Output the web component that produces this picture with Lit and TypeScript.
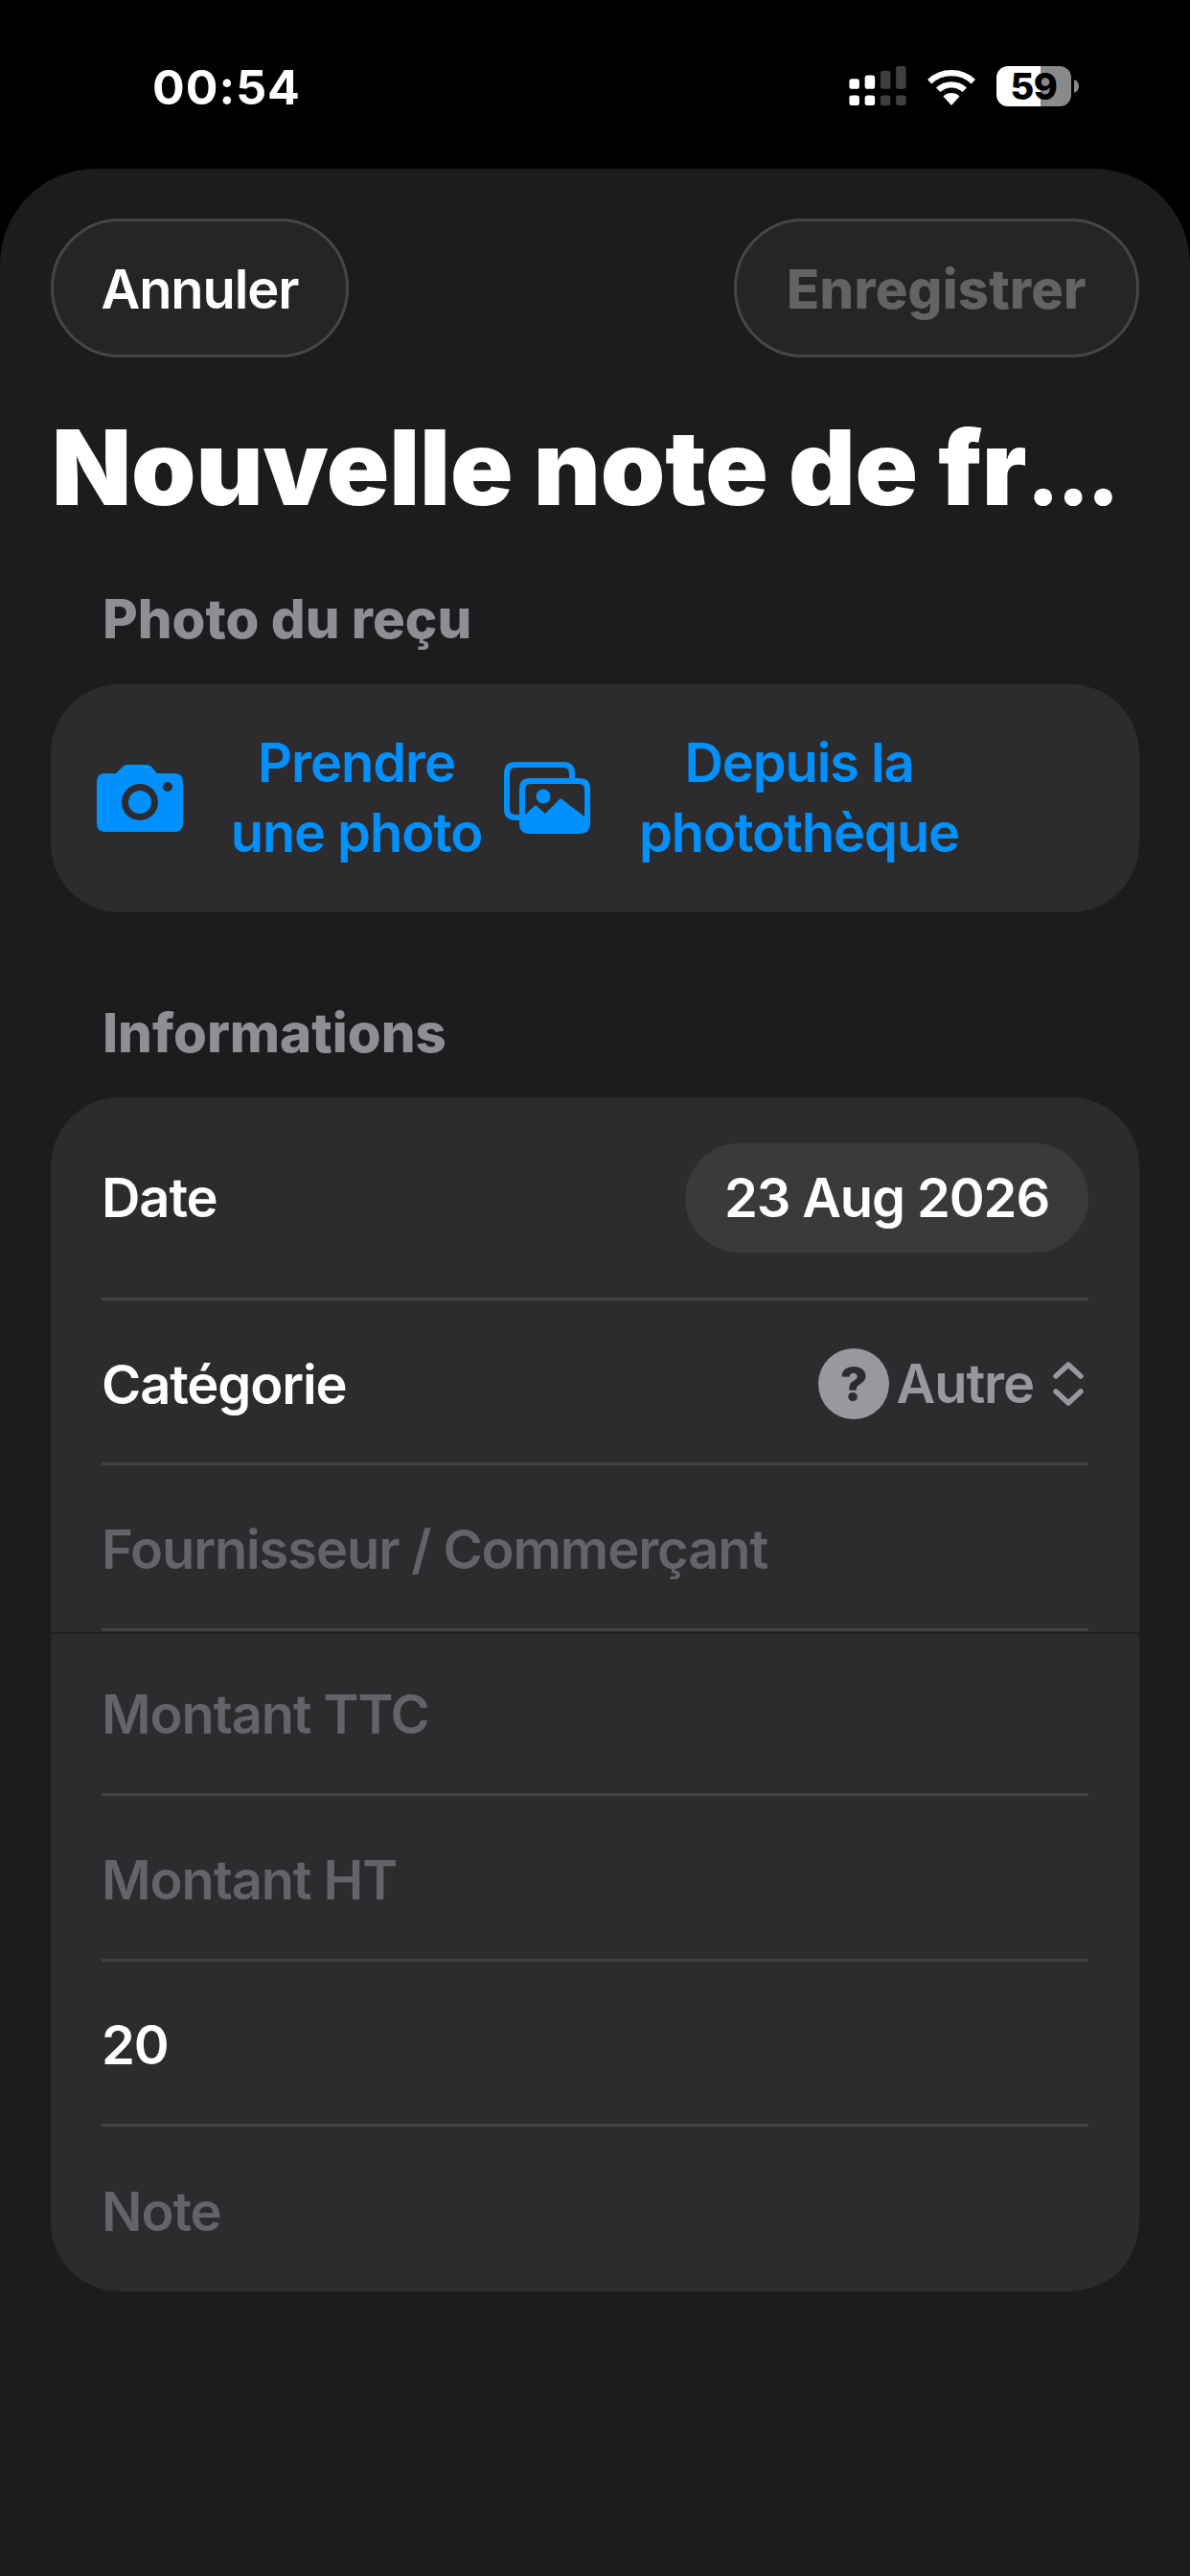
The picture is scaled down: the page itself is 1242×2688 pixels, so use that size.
import { LitElement, html, css } from "lit";
import { customElement } from "lit/decorators.js";

@customElement("app-root")
export class AppRoot extends LitElement {
  static styles = css`
    :host { display: block; width: 1242px; height: 2688px; background: #000; font-family: Inter, "Noto Sans", sans-serif; color: #fff; overflow: hidden; }
    .status { height: 176px; display: flex; justify-content: space-between; box-sizing: border-box; padding: 63px 116px 0 159px; }
    .time { font-size: 50px; font-weight: 700; line-height: 56px; letter-spacing: 1px; }
    .sicons { display: flex; align-items: flex-start; gap: 20px; padding-top: 6px; }
    .batt { display: flex; align-items: center; gap: 3px; }
    .cell { width: 78px; height: 42px; border-radius: 12px; background: linear-gradient(90deg, #fff 46px, #8a8a8a 46px); color: #000; font-size: 38px; font-weight: 800; line-height: 42px; text-align: center; letter-spacing: -0.5px; }
    .sheet { height: 2512px; background: #1c1c1e; border-radius: 100px 100px 0 0; box-sizing: border-box; padding: 52px 53px 0; }
    .nav { display: flex; justify-content: space-between; }
    .pill { height: 145px; box-sizing: border-box; padding-top: 3px; border-radius: 72px; border: 3px solid #464649; background: #252527; display: flex; align-items: center; justify-content: center; }
    .cancel { width: 311px; font-weight: 600; font-size: 56px; letter-spacing: -1.1px; }
    .save { width: 423px; color: #636366; font-weight: 800; font-size: 56px; letter-spacing: 0.3px; }
    h1 { margin: 52px 0 0 1px; font-size: 108px; line-height: 126px; font-weight: 900; letter-spacing: -0.1px; white-space: nowrap; }
    .dots { font-size: 92px; line-height: 0; letter-spacing: -3px; }
    .label { margin: 0 0 0 54px; font-size: 56.4px; line-height: 64px; font-weight: 800; color: #8e8e93; }
    .l1 { margin-top: 63px; }
    .l2 { margin-top: 94px; }
    .card { background: #2c2c2e; border-radius: 72px; }
    .photos { margin-top: 36px; height: 238px; display: flex; align-items: center; color: #0091ff; font-size: 56px; letter-spacing: -1.1px; line-height: 73px; font-weight: 600; text-align: center; padding-left: 48px; }
    .photos svg { flex: none; }
    .p1 { width: 264px; margin-left: 49px; margin-right: 22px; white-space: nowrap; display: flex; justify-content: center; }
    .p2 { width: 338px; margin-left: 49px; white-space: nowrap; display: flex; justify-content: center; }
    .form { margin-top: 35px; height: 1246px; padding: 0 53px; position: relative; }
    .row { display: flex; align-items: center; justify-content: space-between; height: 172.4px; box-sizing: border-box; padding-top: 6px; border-bottom: 3px solid #434347; font-size: 56px; letter-spacing: -1.1px; font-weight: 600; }
    .row.first { height: 212px; padding-top: 0; }
    .row.last { border-bottom: 0; height: 172px; }
    .ph { color: #636369; }
    .date { width: 421px; height: 114px; border-radius: 57px; background: #3a3a3c; display: flex; align-items: center; justify-content: center; }
    .cat { display: flex; align-items: center; color: #98989f; margin-top: -1px; }
    .q { width: 74px; height: 74px; border-radius: 50%; background: #98989f; color: #2c2c2e; font-size: 50px; font-weight: 800; display: flex; align-items: center; justify-content: center; margin-right: 8px; }
    .cat svg { margin-left: 19px; margin-right: 4px; }
    .seam { position: absolute; left: 0; right: 0; top: 558px; height: 2px; background: #222224; }
  `;

  render() {
    return html`
      <div class="status">
        <div class="time">00:54</div>
        <div class="sicons">
          <svg width="60" height="42" viewBox="0 0 62 44">
            <g fill="#fff"><rect x="0" y="14" width="11" height="11" rx="3"/><rect x="17" y="10" width="11" height="15" rx="3"/><rect x="0" y="32" width="11" height="11" rx="3"/><rect x="17" y="32" width="11" height="11" rx="3"/></g>
            <g fill="#3f3f3f"><rect x="34" y="5" width="11" height="20" rx="3"/><rect x="51" y="0" width="11" height="25" rx="3"/><rect x="34" y="32" width="11" height="11" rx="3"/><rect x="51" y="32" width="11" height="11" rx="3"/></g>
          </svg>
          <svg width="54" height="40" viewBox="0 0 54 42" style="margin-top:2px">
            <g fill="none" stroke="#fff" stroke-width="6.5"><path d="M3 15 A35 35 0 0 1 51 15"/><path d="M12.5 24 A21 21 0 0 1 41.500 24"/></g>
            <path d="M18 31 A13 13 0 0 1 36 31 L27 41 Z" fill="#fff"/>
          </svg>
          <div class="batt">
            <div class="cell">59</div>
            <svg width="5" height="14" viewBox="0 0 5 14"><path d="M0 0 Q5 2 5 7 Q5 12 0 14 Z" fill="#8a8a8a"/></svg>
          </div>
        </div>
      </div>
      <div class="sheet">
        <div class="nav">
          <div class="pill cancel">Annuler</div>
          <div class="pill save">Enregistrer</div>
        </div>
        <h1>Nouvelle note de fr<span class="dots">...</span></h1>
        <div class="label l1">Photo du reçu</div>
        <div class="card photos">
          <svg width="90" height="70" viewBox="0 0 90 70">
            <path fill-rule="evenodd" fill="#0091ff" d="M8 9 H20 L27 2 Q29 0 32 0 H52 Q55 0 57 2 L63 9 H81 Q90 9 90 18 V61 Q90 70 81 70 H9 Q0 70 0 61 V18 Q0 9 8 9 Z M45 20 A19 19 0 1 0 45 58 A19 19 0 1 0 45 20 Z M45 27 A12 12 0 1 1 45 51 A12 12 0 1 1 45 27 Z M74 18 A5 5 0 1 0 74 28 A5 5 0 1 0 74 18 Z"/>
          </svg>
          <div class="p1"><span>Prendre<br />une photo</span></div>
          <svg width="90" height="76" viewBox="0 0 90 76">
            <path d="M17 58 H12 Q3 58 3 49 V12 Q3 3 12 3 H62 Q71 3 71 12 V17" fill="none" stroke="#0091ff" stroke-width="6"/>
            <path fill-rule="evenodd" fill="#0091ff" d="M27 17 H79 Q90 17 90 28 V64 Q90 75 79 75 H27 Q16 75 16 64 V28 Q16 17 27 17 Z M28 23 Q22 23 22 29 V55 L33 45 L43 54 L59 38 L84 57 V29 Q84 23 78 23 Z"/>
            <circle cx="41" cy="36" r="7.500" fill="#0091ff"/>
          </svg>
          <div class="p2"><span>Depuis la<br />photothèque</span></div>
        </div>
        <div class="label l2">Informations</div>
        <div class="card form">
          <div class="row first"><span>Date</span><div class="date">23 Aug 2026</div></div>
          <div class="row"><span>Catégorie</span>
            <div class="cat"><div class="q">?</div><span>Autre</span>
              <svg width="34" height="46" viewBox="0 0 34 46" fill="none" stroke="#98989f" stroke-width="5.500" stroke-linecap="round" stroke-linejoin="round"><path d="M4 15 L17 3 L30 15"/><path d="M4 31 L17 43 L30 31"/></svg>
            </div>
          </div>
          <div class="row ph">Fournisseur / Commerçant</div>
          <div class="row ph">Montant TTC</div>
          <div class="row ph">Montant HT</div>
          <div class="row">20</div>
          <div class="row last ph">Note</div>
          <div class="seam"></div>
        </div>
      </div>
    `;
  }
}
